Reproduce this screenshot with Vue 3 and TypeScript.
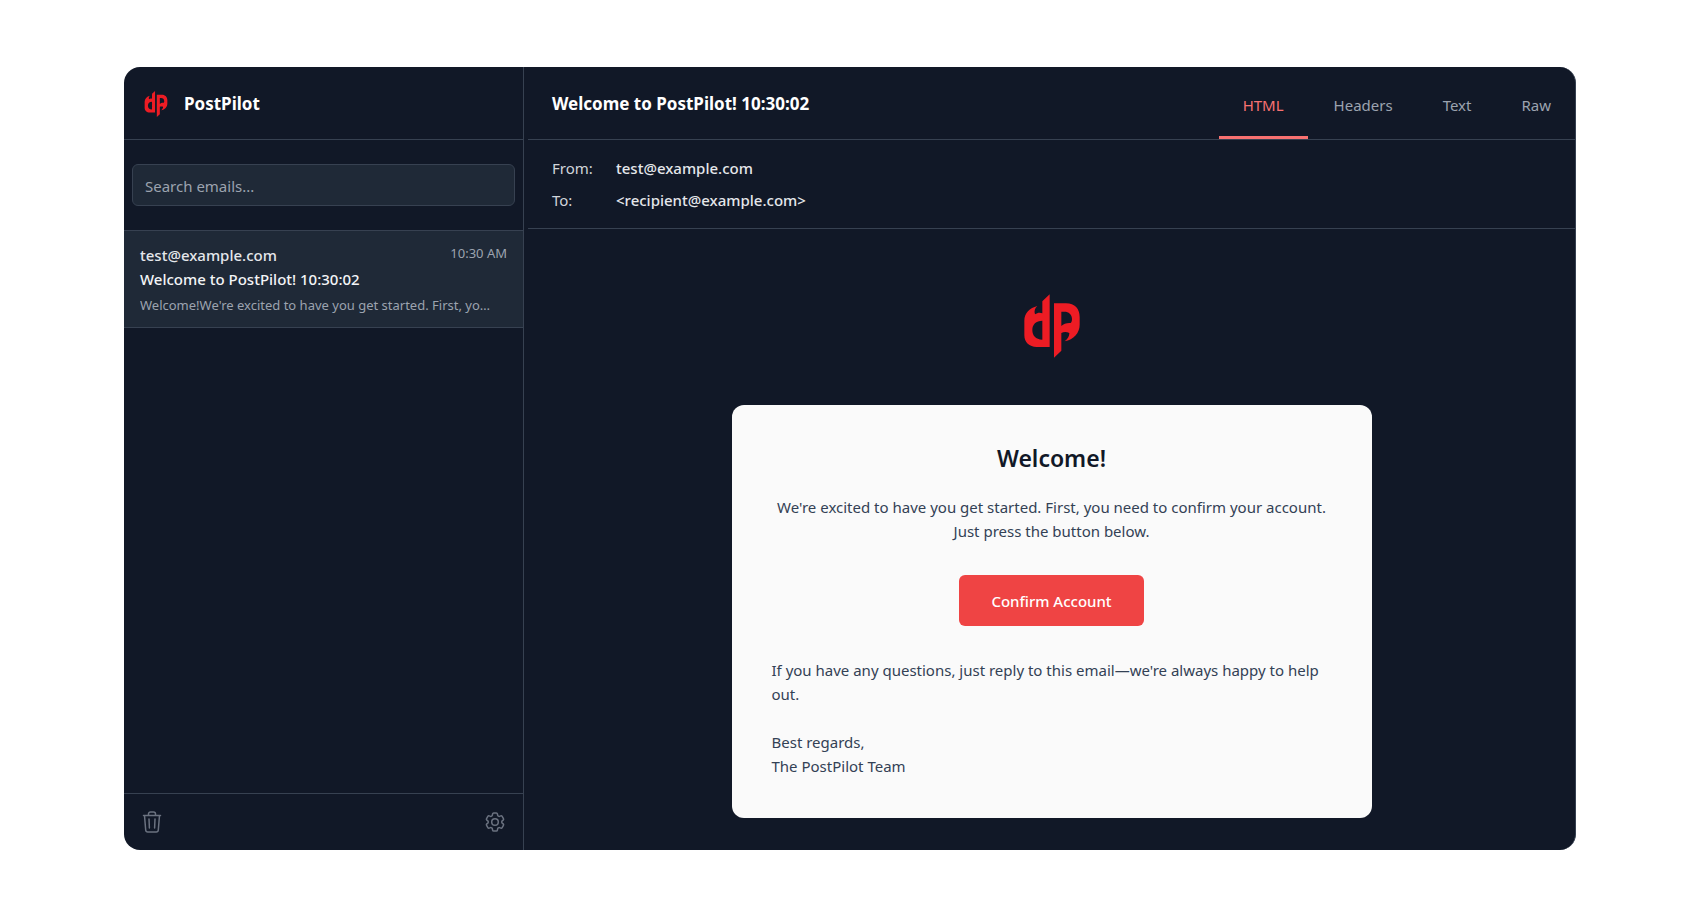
<script setup lang="ts">
import { ref } from 'vue'

interface Email {
  id: number
  from: string
  to: string
  subject: string
  time: string
  preview: string
}

const emails: Email[] = [
  {
    id: 1,
    from: 'test@example.com',
    to: '<recipient@example.com>',
    subject: 'Welcome to PostPilot! 10:30:02',
    time: '10:30 AM',
    preview: "Welcome!We're excited to have you get started. First, yo…",
  },
]
const tabs = ['HTML', 'Headers', 'Text', 'Raw']

const selected = ref<Email>(emails[0])
const activeTab = ref('HTML')
const query = ref('')
</script>

<template>
  <div class="page">
    <div class="window">
      <svg class="symbols" aria-hidden="true">
        <symbol id="logo" viewBox="42 27 168 190">
          <path
            fill-rule="evenodd"
            d="M119 27V185H80C58 185 43 171 43 150V106C43 84 59 68 82 62C74 69 72 78 75 87C82 82 90 81 97 84V48ZM97 106C78 106 67 117 67 134C67 151 77 162 97 163Z"
          />
          <path
            fill-rule="evenodd"
            d="M132 54H168C195 54 209 71 209 95V118C209 143 191 162 164 168C173 161 178 153 178 143C170 139 161 139 154 143V196L132 217ZM154 79V122C161 115 171 112 182 113C185 110 186 106 186 101C186 87 176 79 163 79Z"
          />
        </symbol>
      </svg>

      <aside class="sidebar">
        <header class="brand">
          <svg class="brand-logo" aria-hidden="true"><use href="#logo" /></svg>
          <span>PostPilot</span>
        </header>
        <div class="search">
          <input v-model="query" type="text" placeholder="Search emails..." aria-label="Search emails" />
        </div>
        <div class="list">
          <button
            v-for="mail in emails"
            :key="mail.id"
            type="button"
            class="item"
            :class="{ selected: mail.id === selected.id }"
            @click="selected = mail"
          >
            <span class="item-top">
              <span class="item-from">{{ mail.from }}</span>
              <span class="item-time">{{ mail.time }}</span>
            </span>
            <span class="item-subject">{{ mail.subject }}</span>
            <span class="item-preview">{{ mail.preview }}</span>
          </button>
        </div>
        <footer class="tools">
          <button type="button" aria-label="Delete all emails">
            <svg viewBox="0 0 24 24" aria-hidden="true">
              <path d="M3.5 5.5H20.5M8.5 5.2V4C8.5 2.7 9.3 2 10.5 2H13.5C14.7 2 15.5 2.7 15.5 4V5.2M4.5 5.5L5.7 20C5.8 21.3 6.5 22 7.8 22H16.2C17.5 22 18.2 21.3 18.3 20L19.5 5.5M9 9L9.4 18M15 9L14.6 18" />
            </svg>
          </button>
          <button type="button" aria-label="Settings">
            <svg viewBox="0 0 24 24" aria-hidden="true">
              <path d="M9.594 3.94c.09-.542.56-.94 1.11-.94h2.593c.55 0 1.02.398 1.11.94l.213 1.281c.063.374.313.686.645.87.074.04.147.083.22.127.325.196.72.257 1.075.124l1.217-.456a1.125 1.125 0 0 1 1.37.49l1.296 2.247a1.125 1.125 0 0 1-.26 1.431l-1.003.827c-.293.241-.438.613-.43.992a7.723 7.723 0 0 1 0 .255c-.008.378.137.75.43.991l1.004.827c.424.35.534.955.26 1.43l-1.298 2.247a1.125 1.125 0 0 1-1.369.491l-1.217-.456c-.355-.133-.75-.072-1.076.124a6.47 6.47 0 0 1-.22.128c-.331.183-.581.495-.644.869l-.213 1.281c-.09.543-.56.94-1.11.94h-2.594c-.55 0-1.019-.398-1.11-.94l-.213-1.281c-.062-.374-.312-.686-.644-.87a6.52 6.52 0 0 1-.22-.127c-.325-.196-.72-.257-1.076-.124l-1.217.456a1.125 1.125 0 0 1-1.369-.49l-1.297-2.247a1.125 1.125 0 0 1 .26-1.431l1.004-.827c.292-.24.437-.613.43-.991a6.932 6.932 0 0 1 0-.255c.007-.38-.138-.751-.43-.992l-1.004-.827a1.125 1.125 0 0 1-.26-1.43l1.297-2.247a1.125 1.125 0 0 1 1.37-.491l1.216.456c.356.133.751.072 1.076-.124.072-.044.146-.086.22-.128.332-.183.582-.495.644-.869l.214-1.28Z" />
              <circle cx="12" cy="12" r="3.3" />
            </svg>
          </button>
        </footer>
      </aside>

      <main class="reader">
        <header class="reader-head">
          <h1>{{ selected.subject }}</h1>
          <nav class="tabs" role="tablist">
            <button
              v-for="tab in tabs"
              :key="tab"
              type="button"
              role="tab"
              :aria-selected="tab === activeTab"
              :class="{ active: tab === activeTab }"
              @click="activeTab = tab"
            >
              {{ tab }}
            </button>
          </nav>
        </header>
        <dl class="meta">
          <dt>From:</dt>
          <dd>{{ selected.from }}</dd>
          <dt>To:</dt>
          <dd>{{ selected.to }}</dd>
        </dl>
        <div class="body">
          <svg class="mail-logo" aria-hidden="true"><use href="#logo" /></svg>
          <article class="card">
            <h2>Welcome!</h2>
            <p class="lead">
              We're excited to have you get started. First, you need to confirm your account. Just press the button below.
            </p>
            <a class="confirm" href="#confirm">Confirm Account</a>
            <p>If you have any questions, just reply to this email—we're always happy to help out.</p>
            <p>Best regards,<br />The PostPilot Team</p>
          </article>
        </div>
      </main>
    </div>
  </div>
</template>

<style>
body {
  background: #fff;
}
</style>

<style scoped>
* {
  box-sizing: border-box;
}
.page {
  min-height: 100vh;
  padding: 67px 124px;
  display: flex;
  font-family: "Noto Sans", "Open Sans", sans-serif;
  font-size: 15px;
  line-height: 24px;
}
button,
input {
  font: inherit;
  color: inherit;
}
button {
  padding: 0;
  border: 0;
  background: none;
  cursor: pointer;
}
.window {
  flex: 1;
  min-width: 0;
  display: flex;
  gap: 4px;
  overflow: hidden;
  border-radius: 16px;
  border-right: 1px solid #374151;
  background: #111827;
  color: #e5e7eb;
}
.symbols {
  position: absolute;
  width: 0;
  height: 0;
}
.brand-logo,
.mail-logo {
  fill: #ed1c24;
}
.sidebar {
  width: 400px;
  flex: none;
  display: flex;
  flex-direction: column;
  border-right: 1px solid #374151;
}
.brand {
  height: 73px;
  padding: 2px 20px 0;
  display: flex;
  align-items: center;
  gap: 16px;
  border-bottom: 1px solid #374151;
  color: #fff;
  font-size: 17px;
  font-weight: 700;
}
.brand-logo {
  width: 24px;
  height: 26px;
}
.search {
  padding: 24px 8px;
}
.search input {
  display: block;
  width: 100%;
  height: 42px;
  padding: 2px 12px 0;
  border: 1px solid #374151;
  border-radius: 6px;
  background: #1f2937;
  outline: none;
}
.search input::placeholder {
  color: #9ca3af;
  opacity: 1;
}
.list {
  flex: 1;
  border-top: 1px solid #374151;
}
.item {
  display: flex;
  flex-direction: column;
  width: 100%;
  padding: 12px 16px;
  border-bottom: 1px solid #374151;
  text-align: left;
}
.item.selected {
  background: #1f2937;
}
.item-top {
  display: flex;
  justify-content: space-between;
  font-weight: 500;
}
.item-time {
  color: #9ca3af;
  font-size: 13px;
  line-height: 20px;
  font-weight: 400;
}
.item-subject {
  color: #f3f4f6;
  font-weight: 500;
}
.item-preview {
  padding-top: 4px;
  overflow: hidden;
  color: #9ca3af;
  font-size: 13px;
  line-height: 20px;
  text-overflow: ellipsis;
  white-space: nowrap;
}
.tools {
  height: 57px;
  padding: 0 16px;
  display: flex;
  align-items: center;
  justify-content: space-between;
  border-top: 1px solid #374151;
  color: #6b7280;
}
.tools svg {
  display: block;
  width: 24px;
  height: 24px;
  fill: none;
  stroke: currentColor;
  stroke-width: 1.5;
  stroke-linecap: round;
  stroke-linejoin: round;
}
.reader {
  flex: 1;
  min-width: 0;
  display: flex;
  flex-direction: column;
}
.reader-head {
  height: 73px;
  padding-left: 24px;
  display: flex;
  align-items: center;
  justify-content: space-between;
  border-bottom: 1px solid #374151;
}
.reader-head h1 {
  margin: 0;
  padding-top: 2px;
  color: #fff;
  font-size: 17px;
  font-weight: 700;
}
.tabs {
  align-self: stretch;
  display: flex;
  gap: 2px;
}
.tabs button {
  padding: 6px 24px 0;
  border-bottom: 3px solid transparent;
  color: #9ca3af;
}
.tabs .active {
  border-color: #f87171;
  color: #f87171;
}
.meta {
  margin: 0;
  padding: 16px 24px;
  display: grid;
  grid-template-columns: 40px 1fr;
  gap: 8px 24px;
  border-bottom: 1px solid #374151;
}
.meta dt {
  color: #d1d5db;
}
.meta dd {
  margin: 0;
  font-weight: 500;
}
.body {
  padding: 65px 32px 32px;
  display: flex;
  flex-direction: column;
  align-items: center;
  gap: 47px;
}
.mail-logo {
  width: 56px;
  height: 64px;
}
.card {
  width: 100%;
  max-width: 640px;
  padding: 40px;
  border-radius: 12px;
  background: #fafafa;
  color: #334155;
  text-align: center;
}
.card h2 {
  margin: 0 0 24px;
  color: #111827;
  font-size: 23px;
  line-height: 26px;
  font-weight: 600;
}
.card p {
  margin: 0 0 24px;
  text-align: left;
}
.card .lead {
  margin-bottom: 32px;
  text-align: center;
}
.card p:last-child {
  margin-bottom: 0;
}
.confirm {
  display: inline-block;
  margin-bottom: 32px;
  padding: 14px 32px 13px;
  border-radius: 6px;
  background: #ef4444;
  color: #fff;
  font-weight: 500;
  text-decoration: none;
}
</style>
